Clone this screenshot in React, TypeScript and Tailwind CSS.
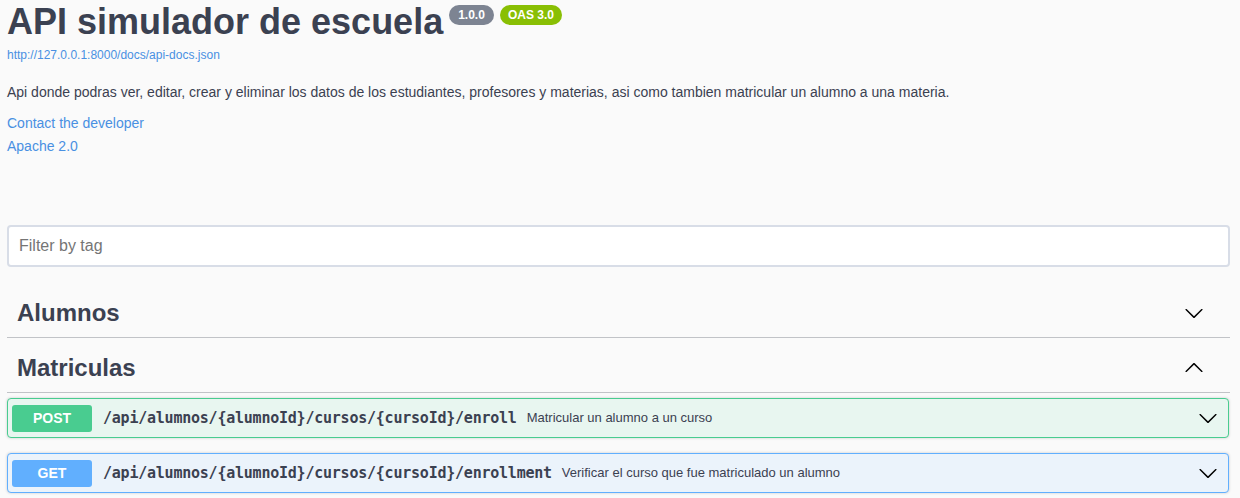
import React from "react"

function Arrow({ up = false, className = "" }: { up?: boolean; className?: string }) {
  return (
    <svg
      viewBox="0 0 20 20"
      width="20"
      height="20"
      className={`${up ? "rotate-180" : ""} ${className}`}
      fill="#000"
    >
      <path d="M17.418 6.109c.272-.268.709-.268.979 0s.271.701 0 .969l-7.908 7.83c-.27.268-.707.268-.979 0l-7.908-7.83c-.27-.268-.27-.701 0-.969.271-.268.709-.268.979 0L10 13.25l7.418-7.141z" />
    </svg>
  )
}

const ops = [
  {
    method: "POST",
    path: "/api/alumnos/{alumnoId}/cursos/{cursoId}/enroll",
    summary: "Matricular un alumno a un curso",
    box: "bg-[#e8f6f0] border-[#49cc90]",
    badge: "bg-[#49cc90]",
  },
  {
    method: "GET",
    path: "/api/alumnos/{alumnoId}/cursos/{cursoId}/enrollment",
    summary: "Verificar el curso que fue matriculado un alumno",
    box: "bg-[#ebf3fb] border-[#61affe]",
    badge: "bg-[#61affe]",
  },
]

export default function App() {
  return (
    <div className="min-h-screen bg-[#fafafa] font-['Liberation_Sans',Arial,sans-serif] text-[#3b4151]">
      <div className="pl-[7px] pr-[10px]">
        {/* Info */}
        <div className="flex items-start pt-[1px]">
          <h1 className="text-[36px] font-bold leading-[41px]">API simulador de escuela</h1>
          <div className="ml-[6px] mt-[4px] flex gap-[6px]">
            <span className="flex h-[20px] items-center rounded-full bg-[#7d8492] px-[9px] text-[12px] font-bold text-white">
              1.0.0
            </span>
            <span className="flex h-[20px] items-center rounded-full bg-[#89bf04] px-[8px] text-[12px] font-bold text-white">
              OAS 3.0
            </span>
          </div>
        </div>
        <a className="mt-[6px] block text-[12px] leading-[14px] text-[#4990e2]">
          http://127.0.0.1:8000/docs/api-docs.json
        </a>
        <p className="mt-[20px] text-[14px] leading-[20px]">
          Api donde podras ver, editar, crear y eliminar los datos de los estudiantes, profesores y materias, asi como tambien matricular un alumno a una materia.
        </p>
        <a className="mt-[10px] block text-[14px] leading-[23px] text-[#4990e2]">Contact the developer</a>
        <a className="block text-[14px] leading-[23px] text-[#4990e2]">Apache 2.0</a>

        {/* Filter */}
        <div className="mt-[67px] flex h-[42px] items-center rounded-[4px] border-2 border-[#d8dde7] bg-white pl-[10px] text-[16px] text-[#757575]">
          Filter by tag
        </div>

        {/* Tags */}
        <div className="mt-[21px] flex h-[50px] items-center border-b border-[#c1c3c7] pl-[10px] pr-[26px]">
          <h3 className="flex-1 text-[24px] font-bold">Alumnos</h3>
          <Arrow />
        </div>
        <div className="mt-[5px] flex h-[50px] items-center border-b border-[#c1c3c7] pl-[10px] pr-[26px]">
          <h3 className="flex-1 text-[24px] font-bold">Matriculas</h3>
          <Arrow up />
        </div>

        <div className="mt-[5px] flex flex-col gap-[15px] pr-[1px]">
          {ops.map((op) => (
            <div
              key={op.path}
              className={`flex h-[40px] items-center rounded-[4px] border pl-[4px] pr-[10px] shadow-[0_0_3px_rgba(0,0,0,0.19)] ${op.box}`}
            >
              <span
                className={`flex h-[27px] w-[80px] items-center justify-center rounded-[3px] text-[14px] font-bold text-white ${op.badge}`}
              >
                {op.method}
              </span>
              <span className="ml-[11px] font-['DejaVu_Sans_Mono',monospace] text-[15px] font-bold tracking-[-0.23px]">
                {op.path}
              </span>
              <span className="ml-[10px] flex-1 text-[13px]">{op.summary}</span>
              <Arrow />
            </div>
          ))}
        </div>
      </div>
    </div>
  )
}
